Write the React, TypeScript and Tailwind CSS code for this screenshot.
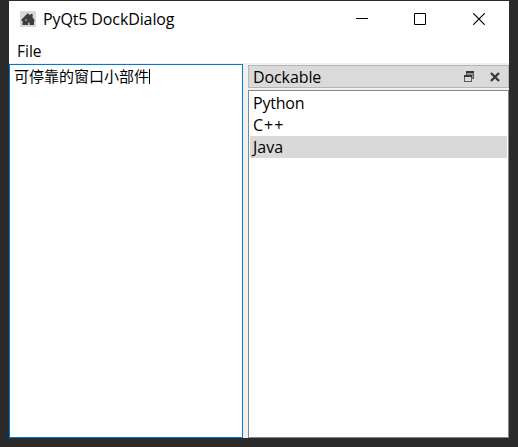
import type { ReactNode } from "react";

function HomeIcon() {
  return (
    <svg width="16" height="16" viewBox="0 0 16 16">
      <rect width="16" height="16" rx="1" fill="#d8d8d8" />
      <path d="M1.5 8.5L7.7 2.2L10.3 4.6V3H12.6V6.5L14.5 9V10H14V14H9.5V11.5H8.2V14H2.5V10H1.5Z" fill="#3d3d3d" />
      <rect x="5" y="8" width="2" height="2" fill="#858585" />
    </svg>
  );
}

function WindowButton({ children, className }: { children: ReactNode; className: string }) {
  return (
    <button className={`flex h-9 items-center justify-center ${className}`}>
      <svg width="12" height="12" viewBox="0 0 12 12" fill="none" stroke="#000">
        {children}
      </svg>
    </button>
  );
}

function TitleBar() {
  return (
    <header className="flex h-9 shrink-0 items-center pl-[11px]">
      <HomeIcon />
      <h1 className="ml-[7px] text-[16px] tracking-[-0.12px]">PyQt5 DockDialog</h1>
      <div className="ml-auto flex">
        <WindowButton className="w-[58px]">
          <path d="M0 5.5H12" />
        </WindowButton>
        <WindowButton className="w-[58px]">
          <path d="M.5 .5H11.5V11.5H.5Z" />
        </WindowButton>
        <WindowButton className="w-[60px]">
          <path d="M.3 .3L11.7 11.7M11.7 .3L.3 11.7" strokeWidth="1.2" />
        </WindowButton>
      </div>
    </header>
  );
}

function DockTitle() {
  return (
    <div className="flex h-[23px] shrink-0 items-center border border-[#b5b5b5] bg-[#dadada] pl-1">
      <span className="text-[16px] leading-[22px] tracking-[-0.1px]">Dockable</span>
      <svg className="ml-auto" width="10" height="11" viewBox="0 0 10 11" shapeRendering="crispEdges">
        <path d="M2 0H10V8H8V11H0V4H2Z" fill="#5c5c5c" />
        <path d="M2 0H10V2H2ZM0 4H8V6H0Z" fill="#363636" />
        <path d="M3 2H9V4H3ZM8 4H9V7H8Z" fill="#909090" />
        <path d="M1 6H7V10H1Z" fill="#dadada" />
      </svg>
      <svg className="ml-4 mr-2" width="10" height="10" viewBox="0 0 10 10">
        <path d="M1 1L9 9M9 1L1 9" stroke="#383838" strokeWidth="2.3" />
      </svg>
    </div>
  );
}

export default function App() {
  return (
    <div className="h-[447px] w-[518px] bg-[#2b2b2b] pl-[9px] pt-px font-['Open_Sans','Noto_Sans_CJK_SC',sans-serif] text-black">
      <main className="flex h-[437px] w-[500px] flex-col bg-white">
        <TitleBar />
        <nav className="flex h-[26px] shrink-0 items-center pl-2 pt-0.5 text-[15.5px] leading-5">File</nav>
        <div className="flex min-h-0 flex-1 bg-[#f0f0f0] pt-px">
          <section className="flex w-[234px] shrink-0 items-start border border-[#0078d7] bg-white pl-[4px] pt-[2px]">
            <p className="font-['Noto_Sans_CJK_SC',sans-serif] text-[15px] leading-[17px]">可停靠的窗口小部件</p>
            <span className="mt-0.5 h-[15px] w-px bg-black" />
          </section>
          <section className="ml-[5px] flex min-w-0 flex-1 flex-col pt-px">
            <DockTitle />
            <ul className="mt-0.5 flex-1 border border-[#828790] bg-white px-px pt-px text-[16px] leading-[22px]">
              <li className="h-[22px] pl-[3px] tracking-[-0.2px]">Python</li>
              <li className="h-[22px] pl-[3px] tracking-[1px]">C++</li>
              <li className="h-[22px] bg-[#d9d9d9] pl-[3px]">Java</li>
            </ul>
          </section>
        </div>
      </main>
    </div>
  );
}
